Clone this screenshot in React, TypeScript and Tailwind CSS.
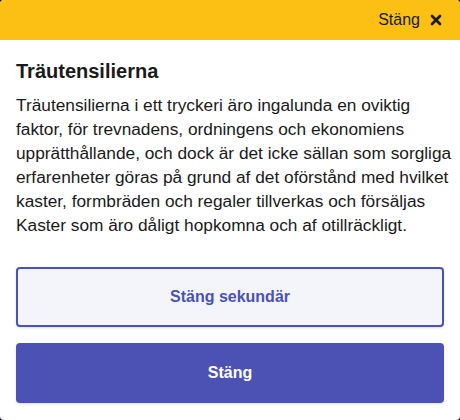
import { X } from "lucide-react";

export default function App() {
  return (
    <div className="h-[420px] w-[460px] bg-gray-900 font-['Liberation_Sans',Arial,sans-serif]">
      <div className="flex h-full flex-col overflow-hidden rounded-[4px] bg-white">
        {/* Top bar */}
        <div className="flex h-10 shrink-0 items-center justify-end bg-[#fcbf14] px-4">
          <button className="flex items-center gap-2 text-base font-medium text-[#1a1a1a]">
            Stäng
            <X className="h-4 w-4" strokeWidth={4} />
          </button>
        </div>

        {/* Content */}
        <div className="flex flex-1 flex-col px-4 pt-[17px]">
          <h1 className="text-[20px] font-bold leading-7 text-[#1a1a1a]">
            Träutensilierna
          </h1>
          <p className="mt-2 whitespace-nowrap text-[17.3px] leading-6 text-[#1a1a1a]">
            Träutensilierna i ett tryckeri äro ingalunda en oviktig
            <br />
            faktor, för trevnadens, ordningens och ekonomiens
            <br />
            upprätthållande, och dock är det icke sällan som sorgliga
            <br />
            erfarenheter göras på grund af det oförstånd med hvilket
            <br />
            kaster, formbräden och regaler tillverkas och försäljas
            <br />
            Kaster som äro dåligt hopkomna och af otillräckligt.
          </p>

          <div className="mt-[30px] flex flex-col gap-4">
            <button className="h-[60px] rounded-[4px] border-2 border-[#4a52b5] bg-[#f4f5fa] text-base font-bold text-[#4a52b5] shadow-sm">
              Stäng sekundär
            </button>
            <button className="h-[60px] rounded-[4px] bg-[#4b52b4] text-base font-bold text-white shadow-sm">
              Stäng
            </button>
          </div>
        </div>
      </div>
    </div>
  );
}
